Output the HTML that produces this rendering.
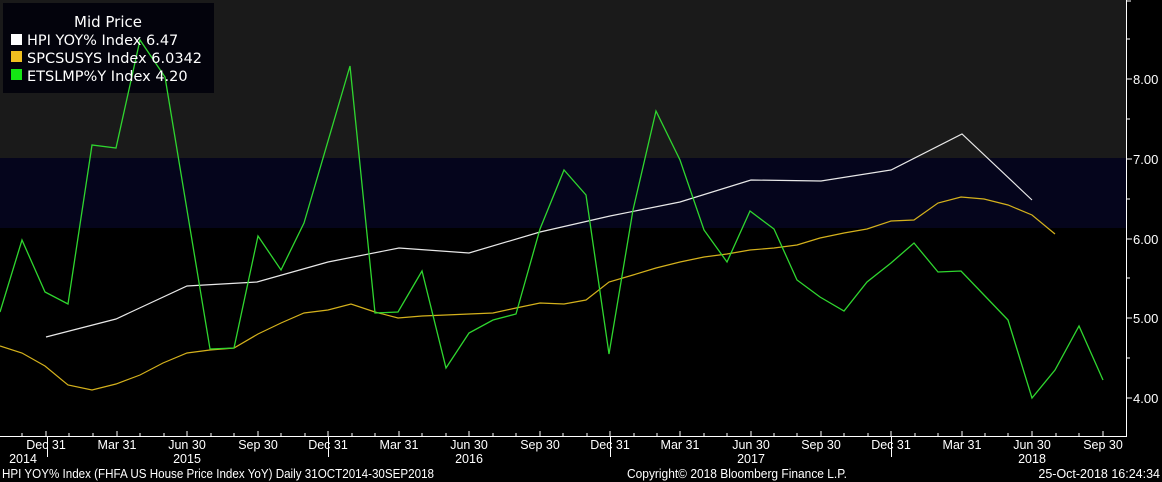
<!DOCTYPE html><html><head><style>
body{margin:0;width:1162px;height:482px;background:#000;overflow:hidden;font-family:"DejaVu Sans","Liberation Sans",sans-serif;color:#fff}
</style></head><body>
<svg width="1162" height="482" style="position:absolute;left:0;top:0" font-family="DejaVu Sans, Liberation Sans, sans-serif">
<rect x="0" y="0" width="1126" height="158" fill="#1a1a1a"/>
<rect x="0" y="158" width="1126" height="70" fill="#05051c"/>
<rect x="3" y="3" width="211" height="90" fill="#03030c"/>
<g stroke="#fff" stroke-width="1" fill="none">
<line x1="1126.5" y1="0" x2="1126.5" y2="436"/>
<line x1="0" y1="436.5" x2="1127" y2="436.5"/>
</g>
<g fill="#fff" font-size="13" font-family="Liberation Sans, sans-serif">
<text x="1133" y="84">8.00</text><text x="1133" y="164">7.00</text><text x="1133" y="244">6.00</text><text x="1133" y="323">5.00</text><text x="1133" y="403">4.00</text>
</g>
<g stroke="#fff"><path d="M1127 79h5M1127 159h5M1127 239h5M1127 318h5M1127 398h5M1127 39h3M1127 119h3M1127 199h3M1127 278h3M1127 358h3M1127 1h4"/></g>
<path stroke="#fff" d="M46 436v-5M117 436v-5M187 436v-5M258 436v-5M328 436v-5M399 436v-5M469 436v-5M540 436v-5M610 436v-5M680 436v-5M751 436v-5M821 436v-5M891 436v-5M962 436v-5M1032 436v-5M1103 436v-5M69 436v-3M93 436v-3M140 436v-3M164 436v-3M211 436v-3M234 436v-3M281 436v-3M305 436v-3M352 436v-3M375 436v-3M422 436v-3M446 436v-3M493 436v-3M516 436v-3M563 436v-3M587 436v-3M634 436v-3M657 436v-3M704 436v-3M727 436v-3M774 436v-3M797 436v-3M844 436v-3M868 436v-3M915 436v-3M938 436v-3M985 436v-3M1008 436v-3M1056 436v-3M1079 436v-3M22 436v-3"/>
<path stroke="#fff" d="M47.5 437v20M328.5 437v20M610.5 437v20M891.5 437v20"/>
<g fill="#fff" font-size="12.5" text-anchor="middle" font-family="Liberation Sans, sans-serif">
<text x="46" y="449">Dec 31</text><text x="117" y="449">Mar 31</text><text x="187" y="449">Jun 30</text><text x="258" y="449">Sep 30</text><text x="328" y="449">Dec 31</text><text x="399" y="449">Mar 31</text><text x="469" y="449">Jun 30</text><text x="540" y="449">Sep 30</text><text x="610" y="449">Dec 31</text><text x="680" y="449">Mar 31</text><text x="751" y="449">Jun 30</text><text x="821" y="449">Sep 30</text><text x="891" y="449">Dec 31</text><text x="962" y="449">Mar 31</text><text x="1032" y="449">Jun 30</text><text x="1103" y="449">Sep 30</text>
<text x="23" y="463">2014</text><text x="187" y="463">2015</text><text x="469" y="463">2016</text><text x="751" y="463">2017</text><text x="1032" y="463">2018</text>
</g>
<g fill="#fff" font-size="12.5" font-family="Liberation Sans, sans-serif">
<text x="2" y="478" textLength="432" lengthAdjust="spacingAndGlyphs">HPI YOY% Index (FHFA US House Price Index YoY)  Daily 31OCT2014-30SEP2018</text>
<text x="627" y="478" textLength="220" lengthAdjust="spacingAndGlyphs">Copyright© 2018 Bloomberg Finance L.P.</text>
<text x="1160" y="478" text-anchor="end">25-Oct-2018 16:24:34</text>
</g>
<polyline fill="none" stroke="#d4b11c" stroke-width="1.2" points="0,346 22,353 45,366 68,385 92,390 116,384 140,375 163,363 187,353 210,350 234,348 258,334 281,323 304,313 328,310 351,304 375,312 398,318 422,316 446,315 469,314 493,313 516,308 540,303 564,304 586,300 609,282 633,275 656,268 680,262 704,257 727,254 750,250 774,248 797,245 820,238 844,233 867,229 891,221 914,220 938,203 961,197 984,199 1008,205 1032,215 1055,234"/>
<polyline fill="none" stroke="#e8e8e8" stroke-width="1.2" points="46,337 116,319 187,286 257,282 328,262 399,248 469,253 540,232 610,216 680,202 751,180 821,181 891,170 962,134 1032,200"/>
<polyline fill="none" stroke="#2fd62f" stroke-width="1.3" points="0,312 22,240 45,292 68,304 92,145 116,148 140,40 165,77 210,349 234,348 258,236 281,270 304,223 350,66 375,313 398,312 422,271 446,368 469,333 493,320 516,314 540,229 564,170 586,195 609,354 633,210 656,111 680,160 704,230 727,262 750,211 774,229 797,280 820,297 844,311 867,282 891,263 914,243 938,272 961,271 984,295 1008,320 1032,398 1055,370 1079,326 1103,380"/>
<text x="108" y="27" fill="#fff" font-size="15" text-anchor="middle">Mid Price</text>
<rect x="11" y="34" width="11" height="11" fill="#fff"/><rect x="11" y="51" width="11" height="11" fill="#f0c020"/><rect x="11" y="69" width="11" height="11" fill="#14e614"/>
<g fill="#fff" font-size="14.5"><text x="27" y="45">HPI YOY% Index  6.47</text><text x="27" y="63">SPCSUSYS Index 6.0342</text><text x="27" y="81">ETSLMP%Y Index 4.20</text></g>
</svg>
</body></html>
